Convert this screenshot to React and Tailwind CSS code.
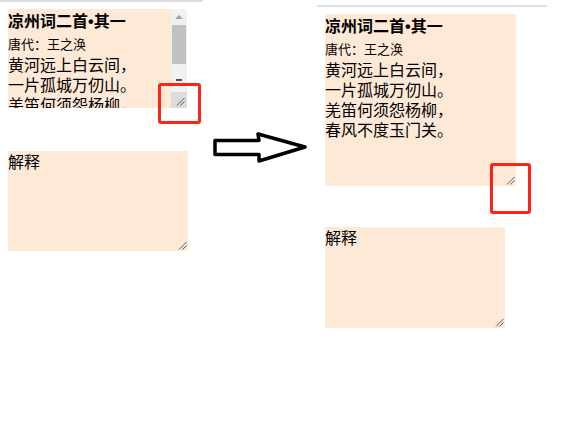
import React from "react";

const font = { fontFamily: '"Noto Sans CJK SC", "Noto Sans", sans-serif' };

function Grip({ className = "" }) {
  return (
    <svg width="9" height="9" viewBox="0 0 9 9" className={className}>
      <line x1="1" y1="8.5" x2="8.5" y2="1" stroke="#5a5a5a" strokeWidth="1" />
      <line x1="4.5" y1="8.5" x2="8.5" y2="4.5" stroke="#5a5a5a" strokeWidth="1" />
    </svg>
  );
}

function Poem({ lines }) {
  return (
    <div className="text-black">
      <div className="text-[16px] font-bold leading-[22px] whitespace-nowrap">
        凉州词二首<span className="font-['Liberation_Sans',sans-serif]">•</span>其一
      </div>
      <div className="text-[13px] leading-[21px]">唐代：王之涣</div>
      {lines.map((l) => (
        <div key={l} className="text-[16px] leading-[20px] whitespace-nowrap">
          {l}
        </div>
      ))}
    </div>
  );
}

const poemLines = ["黄河远上白云间，", "一片孤城万仞山。", "羌笛何须怨杨柳，", "春风不度玉门关。"];

export default function App() {
  return (
    <div className="relative w-[586px] h-[428px] bg-white overflow-hidden flex items-start" style={font}>
      {/* Left column */}
      <div className="w-[203px] shrink-0 flex flex-col">
        <div className="h-[2px] w-[203px] bg-[#dedede]" />
        <div className="relative ml-[8px] mt-[7px] w-[179px] h-[99px] flex">
          <div className="w-[163px] h-[99px] bg-[#fee9d7] overflow-hidden">
            <Poem lines={poemLines} />
          </div>
          <div className="w-[16px] h-[99px] bg-[#f1f1f1] flex flex-col items-center">
            <div className="mt-[6px] w-0 h-0 border-l-[4px] border-r-[4px] border-b-[4px] border-l-transparent border-r-transparent border-b-[#a3a3a3]" />
            <div className="mt-[6px] w-[14px] h-[39px] bg-[#c1c1c1]" />
            <div className="mt-[15px] w-[6px] h-[2px] bg-[#505050]" />
            <div className="mt-auto w-[16px] h-[16px] bg-[#dcdcdc] flex items-end justify-end pr-[2px] pb-[2px]">
              <Grip />
            </div>
          </div>
          <div className="absolute left-[150px] top-[74px] w-[43px] h-[41px] border-[3px] border-[#ff2216] rounded-[3px]" />
        </div>
        <div className="relative ml-[8px] mt-[43px] w-[180px] h-[100px] bg-[#fee9d7]">
          <div className="text-[16px] leading-[20px] text-black">解释</div>
          <Grip className="absolute right-[1px] bottom-[1px]" />
        </div>
      </div>

      {/* Arrow */}
      <div className="ml-[7px] mt-[131px] shrink-0">
        <svg width="98" height="34" viewBox="0 0 98 34">
          <path
            d="M5 9.5 L49 9.5 L48 3 L95 16 L49 30 L49 23.5 L5 23.5 Z"
            fill="#fff"
            stroke="#000"
            strokeWidth="3.5"
            strokeLinejoin="round"
          />
        </svg>
      </div>

      {/* Right column */}
      <div className="ml-[9px] shrink-0 flex flex-col">
        <div className="mt-[5px] h-[2px] w-[230px] bg-[#dedede]" />
        <div className="relative ml-[8px] mt-[7px] w-[191px] h-[172px] bg-[#fee9d7]">
          <Poem lines={poemLines} />
          <Grip className="absolute right-[1px] bottom-[1px]" />
          <div className="absolute left-[165px] top-[149px] w-[41px] h-[51px] border-[3px] border-[#ff2216] rounded-[3px]" />
        </div>
        <div className="relative ml-[8px] mt-[41px] w-[180px] h-[101px] bg-[#fee9d7]">
          <div className="text-[16px] leading-[20px] text-black">解释</div>
          <Grip className="absolute right-[1px] bottom-[1px]" />
        </div>
      </div>
    </div>
  );
}
